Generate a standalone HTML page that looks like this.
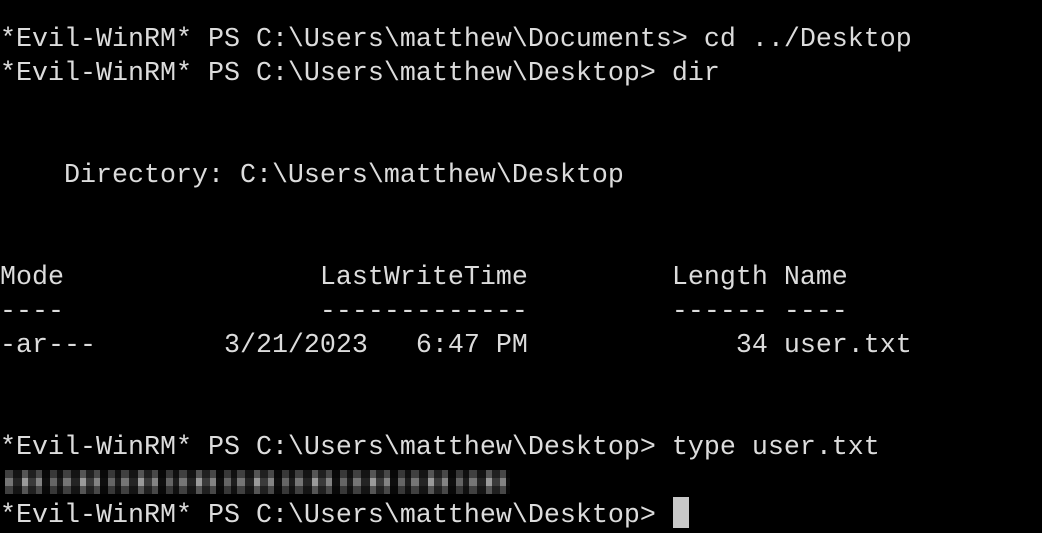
<!DOCTYPE html>
<html><head><style>
html,body{margin:0;padding:0;background:#000;width:1042px;height:528px;overflow:hidden}
pre{position:absolute;left:0;top:23px;margin:0;font-family:"Liberation Mono","DejaVu Sans Mono",monospace;font-size:26.67px;line-height:34px;color:#dcdcdc;white-space:pre}
.blur{position:absolute;left:5px;top:470px;width:505px;height:24px;
background:repeating-linear-gradient(90deg,#8a8a8a 0 8px,#2a2a2a 8px 17px,#b5b5b5 17px 23px,#444 23px 31px,#9a9a9a 31px 37px,#111 37px 45px,#777 45px 52px,#222 52px 58px);opacity:.85}
.blur2{position:absolute;left:5px;top:470px;width:505px;height:24px;
background:repeating-linear-gradient(0deg,rgba(0,0,0,.45) 0 8px,rgba(0,0,0,0) 8px 16px)}
.cur{position:absolute;left:673px;top:497px;width:16px;height:31px;background:#c8c8c8}
</style></head><body>
<pre>*Evil-WinRM* PS C:\Users\matthew\Documents&gt; cd ../Desktop
*Evil-WinRM* PS C:\Users\matthew\Desktop&gt; dir


    Directory: C:\Users\matthew\Desktop


Mode                LastWriteTime         Length Name
----                -------------         ------ ----
-ar---        3/21/2023   6:47 PM             34 user.txt


*Evil-WinRM* PS C:\Users\matthew\Desktop&gt; type user.txt

*Evil-WinRM* PS C:\Users\matthew\Desktop&gt; </pre>
<div class="blur"></div><div class="blur2"></div>
<div class="cur"></div>
</body></html>
